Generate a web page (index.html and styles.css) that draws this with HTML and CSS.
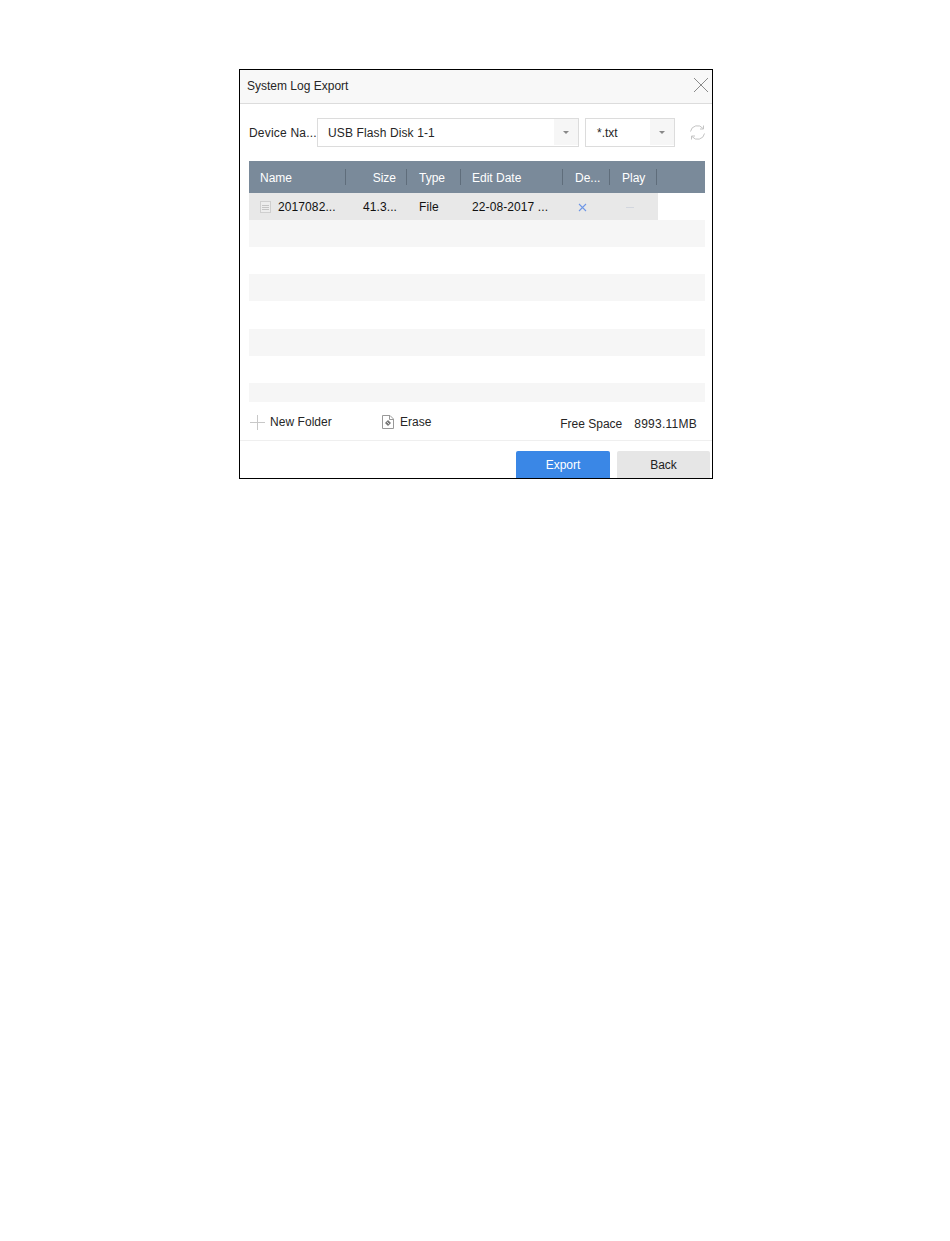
FILE: index.html
```html
<!DOCTYPE html>
<html lang="en">
<head>
  <meta charset="UTF-8" />
  <title>System Log Export</title>
  <link rel="stylesheet" href="styles.css">
</head>
<body>
  <div class="dialog">
    <div class="titlebar">
      <span>System Log Export</span>
      <svg class="close" width="16" height="16" viewBox="0 0 16 16"><path d="M1 1L15 15M15 1L1 15" stroke="#8a8a8a" stroke-width="1" fill="none"/></svg>
    </div>

    <div class="filtros">
      <span class="rotulo">Device Na...</span>
      <div class="select select-device">
        <span class="valor">USB Flash Disk 1-1</span>
        <span class="seta"></span>
      </div>
      <div class="select select-tipo">
        <span class="valor">*.txt</span>
        <span class="seta"></span>
      </div>
      <svg class="refresh" width="17" height="17" viewBox="0 0 17 17" fill="none" stroke="#c4c4c4" stroke-width="1">
        <path d="M1.5 7.5A7 7 0 0 1 14 4.5"/>
        <path d="M14.5 1.5V5H11"/>
        <path d="M15.5 9.5A7 7 0 0 1 3 12.5"/>
        <path d="M2.5 15.5V12H6"/>
      </svg>
    </div>

    <div class="tabela">
      <div class="cabecalho">
        <div class="col col-nome">Name</div>
        <div class="col col-size">Size</div>
        <div class="col col-tipo">Type</div>
        <div class="col col-data">Edit Date</div>
        <div class="col col-del">De...</div>
        <div class="col col-play">Play</div>
      </div>
      <div class="linha">
        <div class="celula col-nome">
          <svg class="arquivo" width="11" height="12" viewBox="0 0 11 12"><rect x="0" y="0" width="11" height="12" fill="#cfcfcf"/><rect x="1" y="1" width="9" height="10" fill="#ededed"/><path d="M2 4.5H9M2 6.5H9M2 8.5H9" stroke="#c4c4c4"/></svg>
          2017082...
        </div>
        <div class="celula col-size">41.3...</div>
        <div class="celula col-tipo">File</div>
        <div class="celula col-data">22-08-2017 ...</div>
        <div class="celula col-del">
          <svg width="9" height="9" viewBox="0 0 9 9"><path d="M1 1L8 8M8 1L1 8" stroke="#6f97e6" stroke-width="1.1" fill="none"/></svg>
        </div>
        <div class="celula col-play"><span class="traco"></span></div>
      </div>
      <div class="faixa cinza"></div>
      <div class="faixa"></div>
      <div class="faixa cinza"></div>
      <div class="faixa alta"></div>
      <div class="faixa cinza"></div>
      <div class="faixa"></div>
      <div class="faixa cinza curta"></div>
    </div>

    <div class="acoes">
      <div class="acao acao-nova">
        <svg width="15" height="15" viewBox="0 0 15 15"><path d="M7.5 0V15M0 7.5H15" stroke="#c8c8c8" fill="none"/></svg>
        New Folder
      </div>
      <div class="acao acao-erase">
        <svg width="12" height="14" viewBox="0 0 12 14" fill="none"><path d="M0.5 0.5H8L11.5 4V13.5H0.5Z" stroke="#999"/><path d="M7.5 0.5V4.5H11.5" stroke="#999"/><path d="M6 5L9 8L6 11L3 8Z" fill="#777"/><path d="M5 7L7 9" stroke="#ddd"/></svg>
        Erase
      </div>
      <div class="espaco">
        <span>Free Space</span>
        <span class="espaco-valor">8993.11MB</span>
      </div>
    </div>

    <div class="rodape">
      <button class="botao primario">Export</button>
      <button class="botao botao-voltar">Back</button>
    </div>
  </div>
</body>
</html>
```

FILE: styles.css
```css
body {
  background: #fff;
  color: #262626;
  font-family: "Liberation Sans", Arial, sans-serif;
  font-size: 12px;
  margin: 0;
  padding: 69px 0 0 239px;
}

.dialog {
  width: 474px;
  height: 410px;
  box-sizing: border-box;
  border: 1px solid #000;
  overflow: hidden;
  background: #fff;
}

.titlebar {
  height: 34px;
  box-sizing: border-box;
  background: #f8f8f8;
  border-bottom: 1px solid #dcdcdc;
  display: flex;
  align-items: center;
  justify-content: space-between;
  padding: 0 3px 2px 7px;
}

.close {
  margin-top: -1px;
}

.filtros {
  display: flex;
  align-items: center;
  height: 29px;
  margin: 14px 0 0 9px;
}

.rotulo {
  width: 68px;
  white-space: nowrap;
  letter-spacing: 0.2px;
}

.select {
  height: 29px;
  box-sizing: border-box;
  border: 1px solid #dcdcdc;
  display: flex;
  align-items: center;
  justify-content: space-between;
  background: #fff;
}

.select-device {
  width: 262px;
  letter-spacing: 0.12px;
}

.select-tipo {
  width: 90px;
  margin-left: 6px;
}

.select-device .valor {
  padding-left: 10px;
}

.select-tipo .valor {
  padding-left: 11px;
}

.seta {
  width: 24px;
  height: 26px;
  margin-bottom: 1px;
  background: #f6f6f6;
  position: relative;
}

.seta::after {
  content: "";
  position: absolute;
  left: 9px;
  top: 12px;
  border: 3px solid transparent;
  border-top-color: #888;
  border-bottom: 0;
}

.refresh {
  margin-left: 14px;
}

.tabela {
  width: 456px;
  margin: 14px 0 0 9px;
}

.cabecalho {
  display: flex;
  height: 32px;
  align-items: center;
  background: #7a8a9a;
  color: #fff;
}

.cabecalho .col {
  height: 16px;
  line-height: 18px;
  box-sizing: border-box;
  border-right: 1px solid #5f6d7b;
  white-space: nowrap;
}

.col-nome { width: 97px; padding-left: 11px; box-sizing: border-box; }
.col-size { width: 61px; padding-right: 10px; box-sizing: border-box; text-align: right; }
.col-tipo { width: 54px; padding-left: 12px; box-sizing: border-box; }
.col-data { width: 102px; padding-left: 11px; box-sizing: border-box; }
.col-del { width: 47px; padding-left: 12px; box-sizing: border-box; }
.col-play { width: 47px; padding-left: 12px; box-sizing: border-box; }

.linha {
  display: flex;
  width: 409px;
  height: 27px;
  box-sizing: border-box;
  padding-top: 1px;
  align-items: center;
  background: #e8e8e8;
  color: #111;
  letter-spacing: 0.1px;
}

.celula {
  white-space: nowrap;
  display: flex;
  align-items: center;
}

.celula.col-size {
  justify-content: flex-end;
}

.celula.col-del {
  padding-left: 15px;
}

.arquivo {
  margin-right: 7px;
}

.traco {
  display: block;
  width: 8px;
  height: 1px;
  margin-left: 4px;
  background: #d2d6de;
}

.faixa {
  height: 27px;
}

.faixa.alta {
  height: 28px;
}

.faixa.cinza {
  background: #f6f6f6;
}

.faixa.curta {
  height: 19px;
}

.acoes {
  height: 39px;
  box-sizing: border-box;
  border-bottom: 1px solid #efefef;
  display: flex;
  align-items: center;
  padding: 2px 15px 0 10px;
}

.acao {
  display: flex;
  align-items: center;
}

.acao-nova svg {
  margin-right: 5px;
}

.acao-nova {
  width: 132px;
  letter-spacing: 0.05px;
}

.acao-erase svg {
  margin-right: 6px;
}

.espaco {
  margin-left: auto;
  margin-top: 4px;
  display: flex;
  gap: 12px;
}

.espaco-valor {
  letter-spacing: 0.25px;
}

.rodape {
  display: flex;
  justify-content: flex-end;
  gap: 7px;
  padding: 10px 2px 0 0;
}

.botao {
  width: 94px;
  height: 30px;
  border: none;
  border-radius: 2px;
  background: #e6e6e6;
  color: #222;
  font-family: inherit;
  font-size: 12px;
  padding: 0 0 2px;
}

.botao-voltar {
  width: 93px;
}

.primario {
  background: #3a87e6;
  color: #fff;
}
```
